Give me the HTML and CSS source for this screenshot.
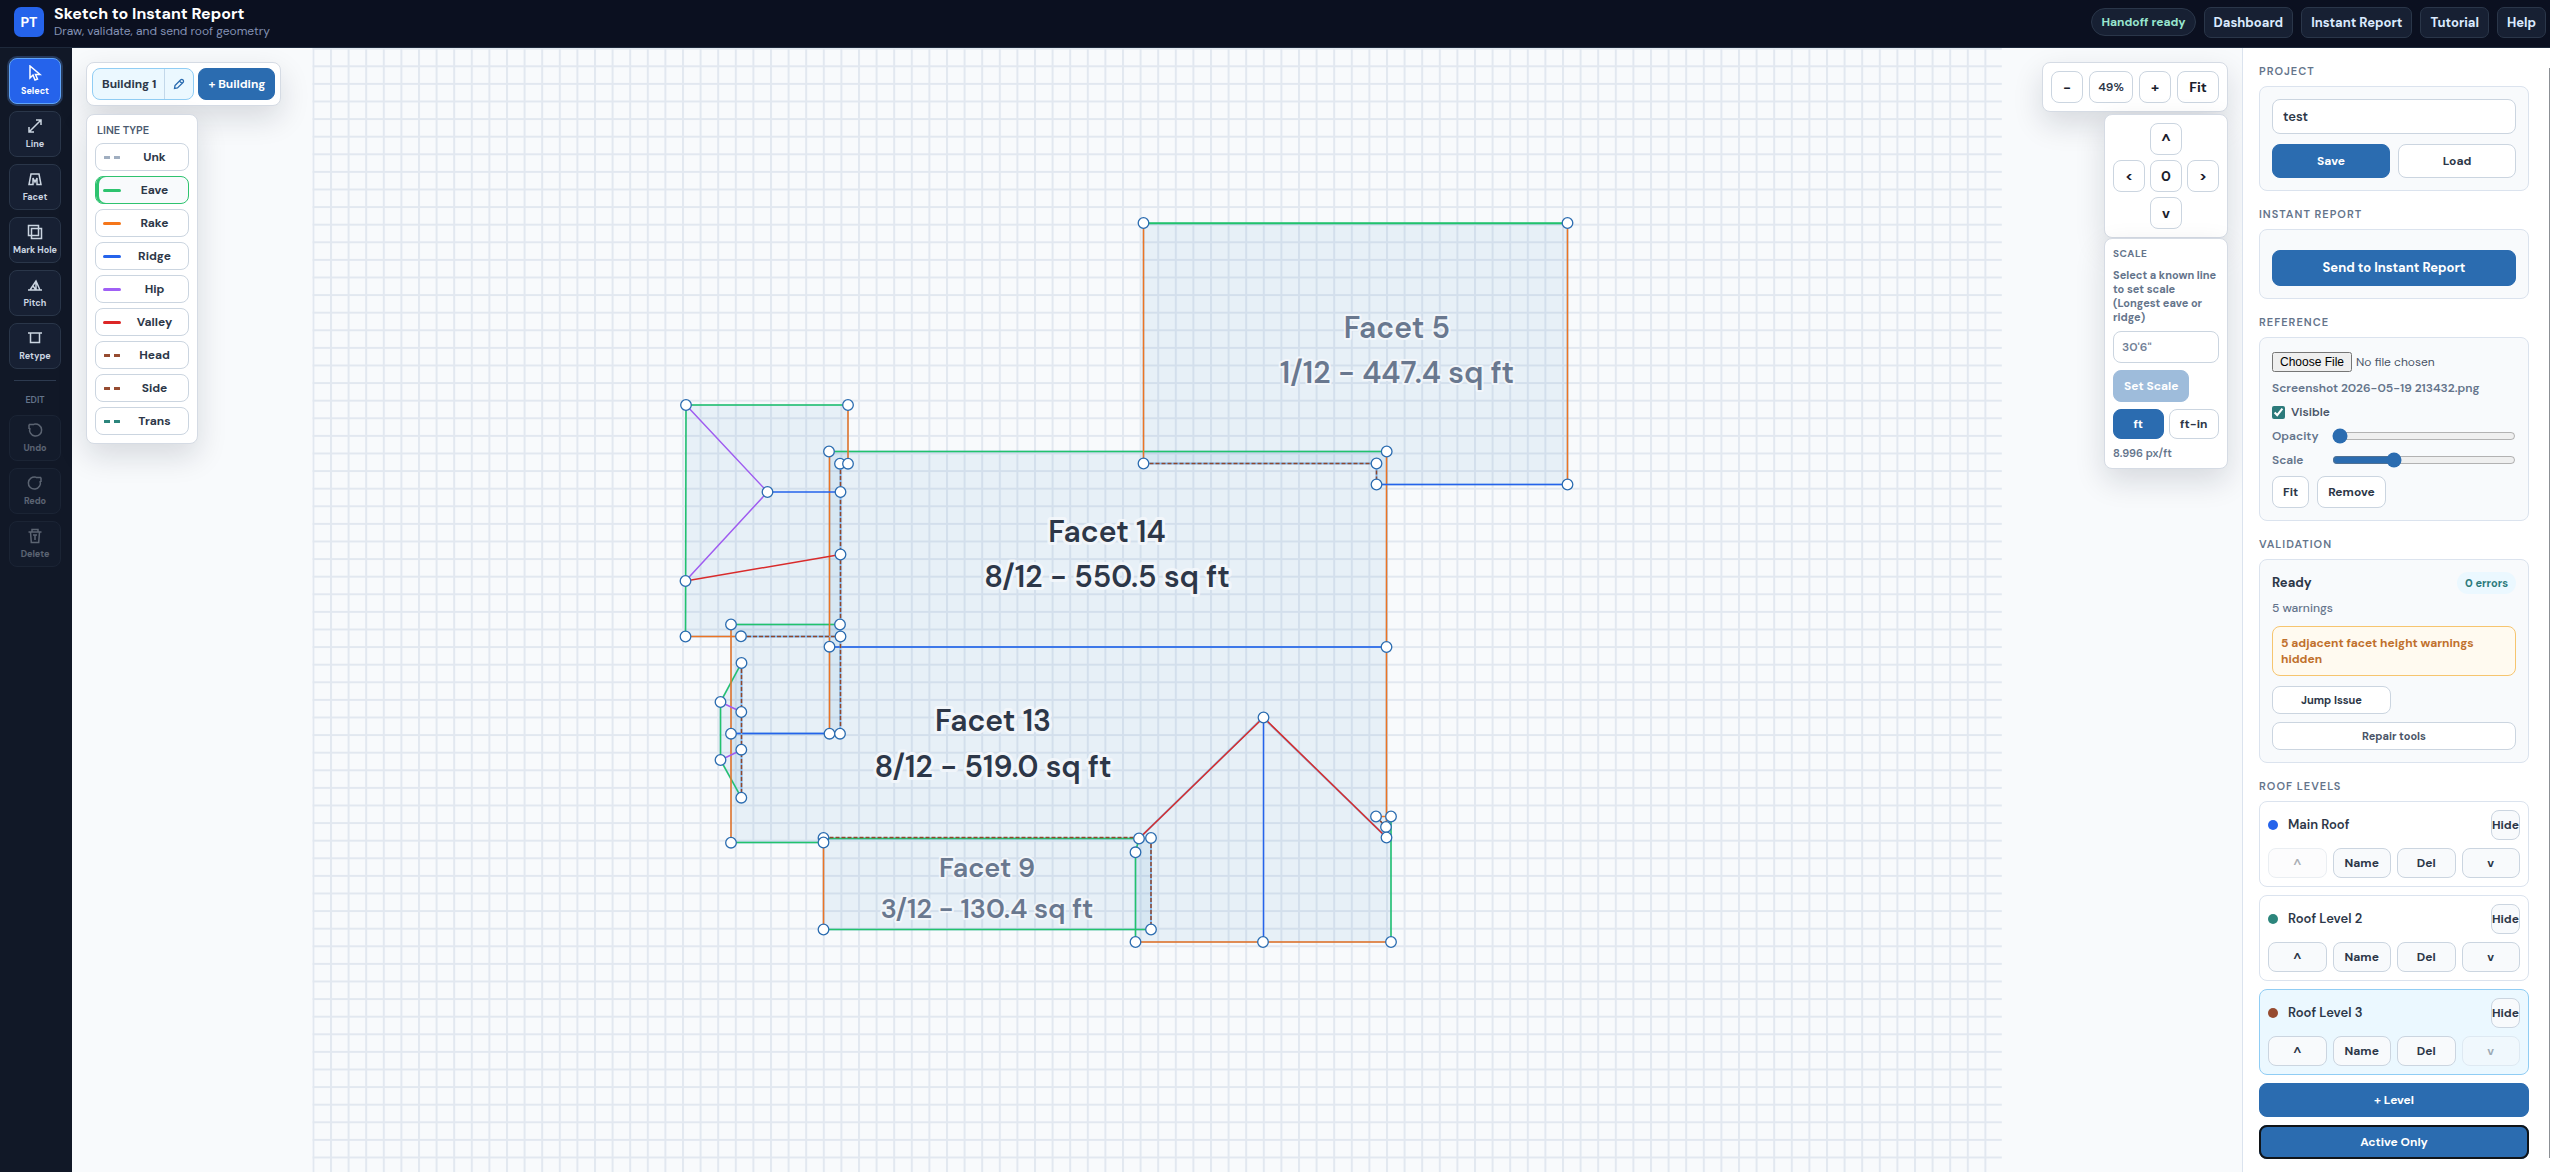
FILE: index.html
```html
<!DOCTYPE html>
<html lang="en">
<head>
<meta charset="utf-8">
<title>Sketch to Instant Report</title>
<link rel="stylesheet" href="styles.css">
</head>
<body>
<div class="app">
  <header class="topbar">
    <div class="brand">
      <div class="logo">PT</div>
      <div>
        <h1>Sketch to Instant Report</h1>
        <p>Draw, validate, and send roof geometry</p>
      </div>
    </div>
    <nav class="topnav">
      <span class="status">Handoff ready</span>
      <a href="#">Dashboard</a>
      <a href="#">Instant Report</a>
      <a href="#">Tutorial</a>
      <a href="#">Help</a>
    </nav>
  </header>

  <div class="workspace">
    <div class="rail">
      <button class="tool active"><svg viewBox="0 0 16 16"><path d="M3 1v12l3-3 2 5 2.500-1-2-4.500H13z"/></svg>Select</button>
      <button class="tool"><svg viewBox="0 0 16 16"><path d="M2.500 13.500l11-11M9 2h5v5M7 14H2V9"/></svg>Line</button>
      <button class="tool"><svg viewBox="0 0 16 16"><path d="M2 13.500h4V7l2 4 2-4v6.500h4L12 3H4z"/></svg>Facet</button>
      <button class="tool"><svg viewBox="0 0 16 16"><path d="M1.500 1.500h10v10h-10zM4.500 4.500h10v10h-10z"/></svg>Mark Hole</button>
      <button class="tool"><svg viewBox="0 0 16 16"><path d="M1 13h14M3 13l6-9 4 9M9 4v9M6 9l3 4"/></svg>Pitch</button>
      <button class="tool"><svg viewBox="0 0 16 16"><path d="M1 3h14M3.500 3v9.500h9V3"/></svg>Retype</button>
      <hr>
      <span class="rail-label">EDIT</span>
      <button class="tool" disabled><svg viewBox="0 0 16 16"><path d="M3 6a6 6 0 1 0 4-3.700M2 2.500h5M2 2.500v4.500"/></svg>Undo</button>
      <button class="tool" disabled><svg viewBox="0 0 16 16"><path d="M13 6a6 6 0 1 1-4-3.700M14 2.500H9M14 2.500v4.500"/></svg>Redo</button>
      <button class="tool" disabled><svg viewBox="0 0 16 16"><path d="M1.500 4h13M5 4V1.500h6V4M3.500 4l.8 10.500h7.400L12.500 4M6 7h4M8 7v5"/></svg>Delete</button>
    </div>

    <main class="canvas">
      <svg class="drawing" viewBox="312 48 1690 1124" preserveAspectRatio="xMidYMid meet">
        <defs>
          <pattern id="grid" x="312.400" y="47.700" width="17.600" height="17.600" patternUnits="userSpaceOnUse">
            <path class="gridline" d="M0 0h17.600v2H2v15.600H0z"/>
          </pattern>
        </defs>
        <rect x="312.400" y="47.700" width="1689.400" height="1130" fill="url(#grid)"/>
        <g class="facets">
          <path d="M1143.500 223.500H1567.500V484.500H1376.500V463.500H1143.500z"/>
          <path d="M686 405H848V464H840.500V636.500H685.500z"/>
          <path d="M829.500 451.500H1387L1386.500 647H829.500z"/>
          <path d="M829.500 647H1386.500V837.500L1263 717.500 1139 838.500H823.500V842.500H731V733.500H829.500z"/>
          <path d="M731 624.500H840V733.500H731z"/>
          <path d="M741.500 663L720.500 702V760L741.500 798z"/>
          <path d="M823.500 838.500H1151V929.500H823.500z"/>
          <path d="M1263 717.500L1386.500 837.500 1391 816.500V942H1135.500V852L1139 838.500z"/>
        </g>
        <g class="edges">
          <path class="eave" d="M1143.500 223H1567.500M1143.500 223.500H1567.500M686 405H848M686 405L685.500 636.500M829.500 451.500H1387M731 624.500H840M741.500 663L720.500 702V760L741.500 798M731 842.500H823.500M823.500 838.500H1139L1135.500 852V942M823.500 929.500H1151M1391 816.500V942"/>
          <path class="rake" d="M1143.500 223V463.500M1567.500 223V484.500M848 405V464M829.500 451.500V733.500M1386.500 451.500V837.500M685.500 636.500H741M731 624.500V842.500M823.500 842.500V929.500M1135.500 942H1391M1376 816.500H1391"/>
          <path class="ridge" d="M1376.500 484.500H1567.500M767.500 492H840.500M829.500 647H1386.500M731 733.500H829.500M1263.500 717.500V942"/>
          <path class="hip" d="M686 405L767.500 492 685.500 581M720.500 702L741.500 712M720.500 760L741.500 750"/>
          <path class="valley" d="M685.500 581L840.500 554.500M1139 838.500L1263.500 717.500 1386.500 837.500"/>
          <path class="wallbase" d="M1143.500 463.500H1376.500V484.500M840.500 464V733.500M741 636.500H840.500M741.500 663V798M1151 838V929.500M1376 816.500L1386 827"/>
          <path class="wall" d="M1143.500 463.500H1376.500V484.500M840.500 464V733.500M741 636.500H840.500M741.500 663V798M1151 838V929.500M1376 816.500L1386 827M823.500 837.500H1139"/>
        </g>
        <g class="nodes">
          <circle cx="1143.500" cy="223" r="5.300"/><circle cx="1567.500" cy="223" r="5.300"/><circle cx="1143.500" cy="463.500" r="5.300"/><circle cx="1376.500" cy="463.500" r="5.300"/><circle cx="1376.500" cy="484.500" r="5.300"/><circle cx="1567.500" cy="484.500" r="5.300"/><circle cx="1386.700" cy="451.500" r="5.300"/><circle cx="1386.500" cy="647" r="5.300"/>
          <circle cx="686" cy="405" r="5.300"/><circle cx="848" cy="405" r="5.300"/><circle cx="829" cy="451.500" r="5.300"/><circle cx="840" cy="463.700" r="5.300"/><circle cx="848" cy="463.700" r="5.300"/><circle cx="767.500" cy="492" r="5.300"/><circle cx="840.500" cy="492" r="5.300"/><circle cx="840.500" cy="554.500" r="5.300"/><circle cx="685.500" cy="581" r="5.300"/><circle cx="685.500" cy="636.500" r="5.300"/><circle cx="731" cy="624.500" r="5.300"/><circle cx="840" cy="624.500" r="5.300"/><circle cx="741" cy="636.300" r="5.300"/><circle cx="840.500" cy="636.500" r="5.300"/><circle cx="829.500" cy="646.700" r="5.300"/>
          <circle cx="741.500" cy="663" r="5.300"/><circle cx="720.500" cy="702" r="5.300"/><circle cx="741.300" cy="712" r="5.300"/><circle cx="731" cy="733.700" r="5.300"/><circle cx="829.500" cy="733.700" r="5.300"/><circle cx="840" cy="733.700" r="5.300"/><circle cx="741.300" cy="749.700" r="5.300"/><circle cx="720.500" cy="760" r="5.300"/><circle cx="741.300" cy="797.700" r="5.300"/><circle cx="731" cy="842.700" r="5.300"/>
          <circle cx="823.500" cy="838" r="5.300"/><circle cx="823.500" cy="842.500" r="5.300"/><circle cx="823.500" cy="929.500" r="5.300"/><circle cx="1139" cy="838.500" r="5.300"/><circle cx="1151" cy="838" r="5.300"/><circle cx="1135.500" cy="852.300" r="5.300"/><circle cx="1151" cy="929.500" r="5.300"/><circle cx="1135.500" cy="942" r="5.300"/>
          <circle cx="1263.500" cy="717.500" r="5.300"/><circle cx="1263" cy="942" r="5.300"/><circle cx="1376" cy="816.500" r="5.300"/><circle cx="1391" cy="816.500" r="5.300"/><circle cx="1386" cy="827" r="5.300"/><circle cx="1386.500" cy="837.500" r="5.300"/><circle cx="1391" cy="942" r="5.300"/>
        </g>
        <g class="facet-label">
          <text x="1107" y="542">Facet 14</text><text x="1107" y="587">8/12 - 550.5 sq ft</text>
          <text x="993" y="731">Facet 13</text><text x="993" y="777">8/12 - 519.0 sq ft</text>
        </g>
        <g class="facet-label muted">
          <text x="1397" y="338">Facet 5</text><text x="1397" y="383">1/12 - 447.4 sq ft</text>
        </g>
        <g class="facet-label muted small">
          <text x="987" y="877">Facet 9</text><text x="987" y="918">3/12 - 130.4 sq ft</text>
        </g>
      </svg>

      <div class="overlay left">
        <div class="float buildings">
          <div class="building">
            <button class="building-name">Building 1</button>
            <button class="building-edit" aria-label="Rename building"><svg viewBox="0 0 12 12"><path d="M2 7.500L7.500 2a1.700 1.700 0 0 1 2.500 2.500L4.500 10 1.500 10.500zM6.500 3L9 5.500"/></svg></button>
          </div>
          <button class="primary add">+ Building</button>
        </div>
        <div class="float types">
          <h2>LINE TYPE</h2>
          <button class="type"><i class="dash slate"></i><span>Unk</span></button>
          <button class="type on"><i class="green"></i><span>Eave</span></button>
          <button class="type"><i class="orange"></i><span>Rake</span></button>
          <button class="type"><i class="blue"></i><span>Ridge</span></button>
          <button class="type"><i class="purple"></i><span>Hip</span></button>
          <button class="type"><i class="red"></i><span>Valley</span></button>
          <button class="type"><i class="dash brown"></i><span>Head</span></button>
          <button class="type"><i class="dash brown"></i><span>Side</span></button>
          <button class="type"><i class="dash teal"></i><span>Trans</span></button>
        </div>
      </div>

      <div class="overlay right">
        <div class="float zoom">
          <button>-</button><button class="percent">49%</button><button>+</button><button class="fit">Fit</button>
        </div>
        <div class="float pan">
          <button class="up">^</button><button class="west">&lt;</button><button>0</button><button>&gt;</button><button class="down">v</button>
        </div>
        <div class="float scale">
          <h3>SCALE</h3>
          <label for="known">Select a known line to set scale (Longest eave or ridge)</label>
          <input id="known" type="text" placeholder="30'6&quot;">
          <button class="primary set" disabled>Set Scale</button>
          <div class="units"><button class="primary">ft</button><button>ft-in</button></div>
          <p>8.996 px/ft</p>
        </div>
      </div>
    </main>

    <aside class="side">
      <h2>PROJECT</h2>
      <section class="card project">
        <input type="text" value="test" aria-label="Project name">
        <div class="pair"><button class="primary">Save</button><button>Load</button></div>
      </section>

      <h2>INSTANT REPORT</h2>
      <section class="card"><button class="primary send">Send to Instant Report</button></section>

      <h2>REFERENCE</h2>
      <section class="card reference">
        <input type="file" aria-label="Reference image">
        <p>Screenshot 2026-05-19 213432.png</p>
        <label class="visible"><input type="checkbox" checked>Visible</label>
        <label class="slide"><span>Opacity</span><input type="range" min="0" max="100" value="0"></label>
        <label class="slide"><span>Scale</span><input type="range" min="0" max="100" value="32"></label>
        <div class="actions"><button>Fit</button><button>Remove</button></div>
      </section>

      <h2>VALIDATION</h2>
      <section class="card validation">
        <div class="ready"><strong>Ready</strong><span class="badge">0 errors</span></div>
        <p>5 warnings</p>
        <div class="alert">5 adjacent facet height warnings hidden</div>
        <button class="jump">Jump Issue</button>
        <button class="repair">Repair tools</button>
      </section>

      <h2>ROOF LEVELS</h2>
      <div class="levels">
        <section class="level">
          <div class="level-head"><i class="dot blue"></i><strong>Main Roof</strong><button>Hide</button></div>
          <div class="level-actions"><button disabled>^</button><button>Name</button><button>Del</button><button>v</button></div>
        </section>
        <section class="level">
          <div class="level-head"><i class="dot teal"></i><strong>Roof Level 2</strong><button>Hide</button></div>
          <div class="level-actions"><button>^</button><button>Name</button><button>Del</button><button>v</button></div>
        </section>
        <section class="level current">
          <div class="level-head"><i class="dot brown"></i><strong>Roof Level 3</strong><button>Hide</button></div>
          <div class="level-actions"><button>^</button><button>Name</button><button>Del</button><button disabled>v</button></div>
        </section>
        <button class="primary">+ Level</button>
        <button class="primary focused">Active Only</button>
      </div>
    </aside>
  </div>
</div>
</body>
</html>
```
FILE: styles.css
```css
* { box-sizing: border-box; }
body, h1, h2, h3, p { margin: 0; }
body { font-family: "DM Sans", Inter, sans-serif; color: #2d3748; font-size: 12px; line-height: 16px; }
button, input { font: inherit; color: inherit; margin: 0; }
button { font-weight: 700; padding: 0; border: 1px solid #cbd5e0; border-radius: 8px; background: #fff; color: #2d3748; }
.primary { background: #2b6cb0; border-color: #2b6cb0; color: #fff; }

.app { display: flex; flex-direction: column; height: 100vh; overflow: hidden; }

/* Top bar */
.topbar { flex: none; height: 48px; display: flex; align-items: center; justify-content: space-between; padding: 0 4px 3px 14px; background: #0b1020; border-bottom: 1px solid #1e293b; }
.brand { display: flex; align-items: center; gap: 10px; }
.logo { width: 30px; height: 30px; border-radius: 7px; background: #2563eb; color: #fff; font-size: 14px; font-weight: 700; line-height: 30px; text-align: center; }
.brand h1 { font-size: 16px; line-height: 19px; font-weight: 700; color: #fff; }
.brand p { font-size: 12px; line-height: 17px; color: #8492b4; }
.topnav { display: flex; align-items: center; gap: 8px; }
.topnav a, .status { font-size: 13px; font-weight: 700; border: 1px solid #2a3649; background: #172033; }
.topnav a { color: #dbeafe; text-decoration: none; line-height: 29px; padding: 0 9px; border-radius: 7px; }
.status { font-size: 12px; line-height: 26px; padding: 0 9px; border-radius: 14px; color: #99e6cf; }

.workspace { flex: 1; min-height: 0; display: flex; }

/* Tool rail */
.rail { flex: none; width: 72px; background: #111827; display: flex; flex-direction: column; align-items: center; gap: 7px; padding: 10px 2px 0 0; }
.tool { width: 52px; height: 46px; display: flex; flex-direction: column; align-items: center; justify-content: center; gap: 4px; background: #172033; border-color: #2a3649; color: #cbd5e1; font-size: 9px; line-height: 12px; }
.tool svg { width: 16px; height: 16px; fill: none; stroke: currentColor; stroke-width: 1.5; }
.tool.active { background: #2563eb; border-color: #60a5fa; color: #fff; box-shadow: 0 0 0 2px #263a5c; }
.tool:disabled { opacity: 0.4; color: #cbd5e1; }
.rail hr { width: 42px; margin: 4px 0 0; border: 0; border-top: 1px solid #2d3a4f; }
.rail-label { margin: 4px 0 0; font-size: 9px; line-height: 16px; font-weight: 600; color: #64748b; }

/* Canvas */
.canvas { flex: 1; position: relative; min-width: 0; background: #f8fafc; }
.drawing { display: block; width: 100%; height: 100%; }
.gridline { fill: #e2e8f0; }
.facets path { fill: #2b7fc4; fill-opacity: 0.08; stroke: #63a4dc; stroke-opacity: 0.4; stroke-width: 2; }
.edges path { fill: none; stroke-width: 1.5; }
.edges .eave { stroke: #22c36b; }
.edges .rake { stroke: #ed7423; }
.edges .ridge { stroke: #2563eb; }
.edges .hip { stroke: #9f5cf0; }
.edges .valley { stroke: #d92b2b; }
.edges .wallbase { stroke: #7db4ee; }
.edges .wall { stroke: #8f472c; stroke-dasharray: 4 2; }
.nodes circle { fill: #fff; stroke: #2b6cb0; stroke-width: 1.3; }
.facet-label text { font-size: 30px; font-weight: 600; text-anchor: middle; fill: #2d3748; stroke: #f4f7fb; stroke-opacity: 0.9; stroke-width: 6px; stroke-linejoin: round; paint-order: stroke; }
.facet-label.muted text { fill: #69788f; stroke-width: 4px; }
.facet-label.small text { font-size: 27px; }

/* Floating panels */
.overlay { position: absolute; top: 14px; display: flex; flex-direction: column; }
.overlay.left { left: 14px; align-items: flex-start; gap: 8px; }
.overlay.right { right: 14px; align-items: flex-end; }
.float { background: #fff; border: 1px solid #d5dbe4; border-radius: 8px; box-shadow: 0 12px 30px rgba(15, 23, 42, 0.14); }
.buildings { display: flex; gap: 4px; padding: 5px; }
.building { display: flex; height: 32px; border: 1px solid #90cdf4; border-radius: 8px; background: #ebf8ff; }
.building button { border: 0; background: none; border-radius: 0; }
.building .building-name { padding: 0 8px 0 9px; border-right: 1px solid #c3d8ea; }
.building .building-edit { width: 28px; display: flex; align-items: center; justify-content: center; }
.building svg { width: 12px; height: 12px; fill: none; stroke: #2b6cb0; stroke-width: 1.3; }
.add { padding: 0 9px; }
.types { width: 112px; padding: 7px 8px 8px; display: flex; flex-direction: column; gap: 5px; }
.types h2 { font-size: 11px; line-height: 16px; font-weight: 600; color: #4a5b70; padding-left: 2px; }
.type { height: 28px; display: flex; align-items: center; padding-left: 7px; }
.type span { flex: 1; }
.type i { width: 18px; height: 3px; border-radius: 2px; background: currentColor; }
.type i.dash { background: linear-gradient(90deg, transparent 1px, currentColor 1px 7px, transparent 7px 11px, currentColor 11px 17px, transparent 17px); }
.type.on { border-color: #2ec36f; background: #f8fafc; box-shadow: inset 3px 0 #2ec36f; }
.slate { color: #a0aec0; }
.green { color: #2ec36f; }
.orange { color: #f5761a; }
.blue { color: #2563eb; }
.purple { color: #a060f5; }
.red { color: #dc2626; }
.brown { color: #964b30; }
.teal { color: #2c857c; }

.zoom { display: flex; gap: 6px; padding: 8px; margin-bottom: 2px; }
.zoom button, .pan button { width: 32px; height: 32px; font-size: 14px; color: #1a202c; }
.zoom .percent { width: 44px; font-size: 12px; font-weight: 600; color: #2d3748; }
.zoom .fit { width: 42px; }
.pan { display: grid; grid-template-columns: repeat(3, 32px); gap: 5px; padding: 8px; }
.pan .up, .pan .down { grid-column: 2; }
.pan .west { grid-column: 1; }
.scale { width: 124px; padding: 8px; display: flex; flex-direction: column; align-items: flex-start; gap: 7px; }
.scale h3 { font-size: 10px; line-height: 14px; font-weight: 700; letter-spacing: 0.5px; color: #64748b; }
.scale label { font-size: 11px; line-height: 14px; font-weight: 700; color: #64748b; }
.scale input { width: 100%; height: 32px; padding: 0 8px; border: 1px solid #cbd5e0; border-radius: 8px; font-weight: 600; }
.scale input::placeholder { color: #718096; }
.set { height: 32px; padding: 0 10px; opacity: 0.45; }
.units { display: flex; gap: 5px; width: 100%; }
.units button { flex: 1; height: 30px; }
.scale p { font-size: 11px; line-height: 14px; font-weight: 600; color: #64748b; }

/* Side panel */
.side { position: relative; flex: none; width: 308px; padding: 16px 21px 12px 16px; background: #fff; border-left: 1px solid #dbe3ee; overflow: hidden; }
.side::after { content: ""; position: absolute; top: 20px; right: 0; bottom: 14px; width: 1px; background: #8b8f94; }
.side h2 { font-size: 11px; line-height: 14px; font-weight: 600; letter-spacing: 1px; color: #64748b; margin-bottom: 8px; }
.card { border: 1px solid #dbe3ee; border-radius: 8px; background: #f8fafc; padding: 12px; margin-bottom: 16px; }
.project input { display: block; width: 100%; height: 35px; padding: 0 10px; border: 1px solid #cbd5e0; border-radius: 8px; background: #fff; font-size: 13px; font-weight: 600; }
.pair { display: flex; gap: 8px; margin-top: 10px; }
.pair button { flex: 1; height: 34px; }
.send { display: block; width: 100%; height: 36px; margin-top: 8px; font-size: 13px; }
.reference { display: flex; flex-direction: column; gap: 8px; }
.reference > input { width: 100%; height: 22px; padding-top: 2px; font-size: 12px; color: #4a5568; }
.reference p { font-weight: 600; color: #64748b; }
.visible { display: flex; align-items: center; gap: 6px; font-weight: 600; color: #4a5568; }
.visible input { width: 13px; height: 13px; accent-color: #2c7a7b; }
.slide { display: flex; align-items: center; font-weight: 600; color: #64748b; }
.slide span { width: 60px; }
.slide input { flex: 1; min-width: 0; height: 16px; accent-color: #2b6cb0; }
.actions { display: flex; gap: 8px; }
.actions button { height: 32px; padding: 0 10px; }
.validation { display: flex; flex-direction: column; }
.ready { display: flex; align-items: center; justify-content: space-between; height: 22px; font-size: 13px; }
.badge { font-size: 11px; font-weight: 700; line-height: 22px; padding: 0 8px; border-radius: 11px; background: #ebf8ff; color: #2c7a7b; }
.validation p { margin: 6px 0 10px; font-weight: 500; color: #64748b; }
.alert { padding: 8px; border: 1px solid #f6c56f; border-radius: 8px; background: #fffaf0; color: #c0702c; font-weight: 700; }
.jump, .repair { height: 28px; font-size: 11px; }
.jump { width: 119px; margin-top: 10px; }
.repair { margin-top: 8px; color: #4a5568; }
.levels { display: flex; flex-direction: column; gap: 8px; }
.level { border: 1px solid #dbe3ee; border-radius: 8px; padding: 8px; display: flex; flex-direction: column; gap: 8px; }
.level.current { background: #ebf8ff; border-color: #90cdf4; }
.level-head { display: flex; align-items: center; gap: 10px; }
.level-head strong { flex: 1; font-size: 13px; font-weight: 600; }
.dot { width: 10px; height: 10px; border-radius: 50%; background: currentColor; }
.level button { height: 30px; background: #f8fafc; }
.level-head button { width: 29px; }
.level-actions { display: grid; grid-template-columns: repeat(4, 1fr); gap: 6px; }
.level button:disabled { opacity: 0.4; }
.levels > button { height: 34px; }
.focused { outline: 2px solid #101418; outline-offset: -2px; }
```
